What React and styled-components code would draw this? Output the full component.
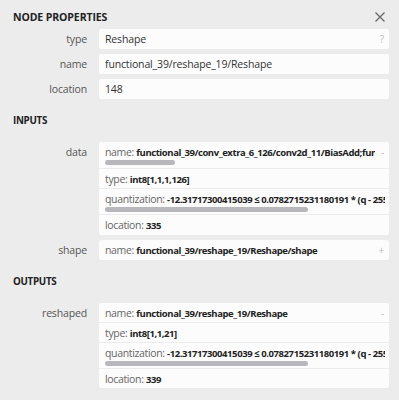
import React from "react";
import styled, { createGlobalStyle } from "styled-components";

const Global = createGlobalStyle`
  html, body { margin: 0; padding: 0; background: #ececec; }
  body { font-family: "Open Sans", "Noto Sans", sans-serif; font-size: 10.5px; letter-spacing: -0.15px; color: #333; }
`;

const Panel = styled.div`
  width: 399px;
  height: 400px;
  box-sizing: border-box;
  padding: 0 10px 0 13px;
  overflow: hidden;
  background: #ececec;
`;

const TitleBar = styled.div`
  display: flex;
  align-items: center;
  justify-content: space-between;
  height: 29px;
  padding-top: 4px;
  box-sizing: border-box;
`;

const Title = styled.div`
  font-weight: 700;
  font-size: 10.5px;
  letter-spacing: -0.1px;
  color: #222;
`;

const Close = styled.svg`
  width: 10px;
  height: 10px;
  margin-right: 4px;
`;

const Section = styled.div`
  font-weight: 700;
  font-size: 9.8px;
  letter-spacing: -0.3px;
  color: #222;
  height: 43px;
  display: flex;
  align-items: center;
`;

const Rows = styled.div`
  display: flex;
  flex-direction: column;
  gap: 5px;
`;

const Row = styled.div`
  display: grid;
  grid-template-columns: 74px 1fr;
  column-gap: 12px;
  align-items: start;
`;

const Label = styled.div`
  text-align: right;
  color: #555;
  line-height: 14px;
  padding-top: 3px;
`;

const Box = styled.div`
  background: #fcfcfc;
  border-radius: 2px;
  min-width: 0;
  overflow: hidden;
`;

const Sub = styled.div`
  position: relative;
  padding: 3px ${(p) => (p.$mark ? 14 : 4)}px 3px 6px;
  border-top: ${(p) => (p.$first ? "none" : "1px solid #ececec")};
  line-height: 14px;
  height: ${(p) => p.$h}px;
  box-sizing: border-box;
`;

const Line = styled.div`
  white-space: nowrap;
  overflow: hidden;
  color: ${(p) => (p.$plain ? "#333" : "#666")};
`;

const Key = styled.span`
  letter-spacing: -0.35px;
`;

const Strong = styled.b`
  font-weight: 700;
  font-size: 9.5px;
  letter-spacing: -0.42px;
  color: #222;
`;

const Thumb = styled.div`
  height: 5px;
  border-radius: 3px;
  background: #b8b8bc;
`;

const Mark = styled.span`
  position: absolute;
  right: 5px;
  top: 3px;
  color: #bbb;
  font-size: 10px;
  line-height: 14px;
`;

function Simple({ label, value, mark }) {
  return (
    <Row>
      <Label>{label}</Label>
      <Box>
        <Sub $first $h={20} $mark={!!mark}>
          <Line $plain>{value}</Line>
          {mark && <Mark>{mark}</Mark>}
        </Sub>
      </Box>
    </Row>
  );
}

function Arg({ label, items, mark }) {
  return (
    <Row>
      <Label>{label}</Label>
      <Box>
        {items.map((it, i) => {
          const hasMark = i === 0 && !!mark;
          return (
            <Sub key={i} $first={i === 0} $h={it.h} $mark={hasMark}>
              <Line>
                <Key>{it.k}: </Key>
                <Strong>{it.v}</Strong>
              </Line>
              {it.thumb && <Thumb style={{ width: it.thumb }} />}
              {hasMark && <Mark>{mark}</Mark>}
            </Sub>
          );
        })}
      </Box>
    </Row>
  );
}

const quant = "-12.31717300415039 \u2264 0.0782715231180191 * (q - 255)";

export default function App() {
  return (
    <Panel>
      <Global />
      <TitleBar>
        <Title>NODE PROPERTIES</Title>
        <Close viewBox="0 0 10 10">
          <path d="M0.5 0.5 L9.5 9.5 M9.5 0.5 L0.5 9.5" stroke="#666" strokeWidth="1.3" />
        </Close>
      </TitleBar>
      <Rows>
        <Simple label="type" value="Reshape" mark="?" />
        <Simple label="name" value="functional_39/reshape_19/Reshape" />
        <Simple label="location" value="148" />
      </Rows>
      <Section>INPUTS</Section>
      <Rows>
        <Arg
          label="data"
          mark="-"
          items={[
            { k: "name", v: "functional_39/conv_extra_6_126/conv2d_11/BiasAdd;functional_39", h: 26, thumb: 70 },
            { k: "type", v: "int8[1,1,1,126]", h: 20 },
            { k: "quantization", v: quant, h: 26, thumb: 203 },
            { k: "location", v: "335", h: 21 },
          ]}
        />
        <Arg
          label="shape"
          mark="+"
          items={[{ k: "name", v: "functional_39/reshape_19/Reshape/shape", h: 20 }]}
        />
      </Rows>
      <Section>OUTPUTS</Section>
      <Rows>
        <Arg
          label="reshaped"
          mark="-"
          items={[
            { k: "name", v: "functional_39/reshape_19/Reshape", h: 19 },
            { k: "type", v: "int8[1,1,21]", h: 20 },
            { k: "quantization", v: quant, h: 26, thumb: 203 },
            { k: "location", v: "339", h: 20 },
          ]}
        />
      </Rows>
    </Panel>
  );
}
